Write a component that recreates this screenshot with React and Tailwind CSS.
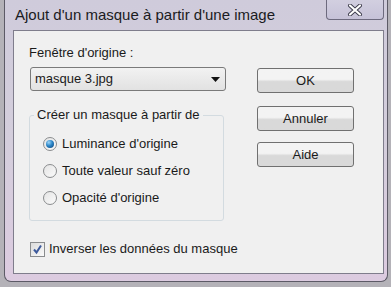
import React from 'react'

const font = { fontFamily: '"Liberation Sans", Arial, sans-serif' }

function Radio({ checked, label }) {
    return (
        <div className="flex items-center h-[16px]">
            <span className="w-[14px] h-[14px] rounded-full border border-[#8a8c8e] bg-gradient-to-br from-[#e4e4e4] to-[#fbfbfb] flex items-center justify-center shrink-0">
                {checked && (
                    <span className="w-[8px] h-[8px] rounded-full bg-[radial-gradient(circle_at_35%_30%,#9fd6f8_0%,#2b86c8_45%,#0e3f73_100%)]"></span>
                )}
            </span>
            <span className="ml-[5px] text-[13px] leading-[16px] text-[#1a1a1a] whitespace-nowrap">{label}</span>
        </div>
    )
}

function Button({ children, className }) {
    return (
        <div className={"w-[97px] h-[25px] rounded-[3px] border border-[#707070] bg-gradient-to-b from-[#f3f3f3] from-45% to-[#d9d9d9] to-55% flex items-center justify-center text-[13px] text-[#1a1a1a] " + className}>
            {children}
        </div>
    )
}

export default function App() {
    return (
        <div style={font} className="w-[391px] h-[287px] bg-[#b4b2b8] overflow-hidden">
            {/* window frame */}
            <div className="ml-[4px] w-[384px] h-[282px] border-l border-r border-b border-[#5c5a66] rounded-b-[7px] bg-gradient-to-b from-[#cfcbdb] via-[#d4cedc] to-[#dccbe0] flex flex-col">
                {/* title bar */}
                <div className="h-[29px] flex items-start">
                    <div className="ml-[10px] mt-[6px] text-[15px] leading-[18px] text-[#1b1b22] whitespace-nowrap">Ajout d'un masque à partir d'une image</div>
                    <div className="ml-auto mr-[3px] w-[58px] h-[20px] border border-t-0 border-[#6d6a7e] rounded-b-[4px] bg-gradient-to-b from-[#d2cfe0] to-[#c6c2d8] flex items-center justify-center">
                        <svg width="16" height="12" viewBox="0 0 16 12">
                            <path d="M3 1.5 L13 10.5 M13 1.5 L3 10.5" stroke="#3b3a4a" strokeWidth="4" strokeLinecap="round" />
                            <path d="M3 1.5 L13 10.5 M13 1.5 L3 10.5" stroke="#ffffff" strokeWidth="2.2" strokeLinecap="round" />
                        </svg>
                    </div>
                </div>

                {/* client area */}
                <div className="ml-[8px] mt-px w-[371px] h-[244px] border border-[#7f7d8c] bg-[#f0f0f0] flex">
                    <div className="pl-[15px] flex flex-col w-[228px]">
                        <div className="mt-[14px] text-[13px] leading-[16px] text-[#1a1a1a] whitespace-nowrap">Fenêtre d'origine :</div>
                        <div className="mt-[6px] ml-px w-[196px] h-[24px] rounded-[3px] border border-[#7a7a7a] bg-gradient-to-b from-[#f2f2f2] to-[#e2e2e2] flex items-center">
                            <span className="ml-[4px] text-[13px] text-[#1a1a1a] whitespace-nowrap">masque 3.jpg</span>
                            <svg className="ml-auto mr-[5px]" width="9" height="5" viewBox="0 0 9 5">
                                <path d="M0 0 H9 L4.5 5 Z" fill="#111" />
                            </svg>
                        </div>
                        <fieldset className="mt-[16px] w-[195px] h-[114px] border border-[#d3dbe0] rounded-[3px]">
                            <legend className="ml-[4px] px-[3px] text-[13px] leading-[16px] text-[#1a1a1a] whitespace-nowrap">Créer un masque à partir de</legend>
                            <div className="pl-[13px] pt-[13px] flex flex-col gap-[11px]">
                                <Radio checked label="Luminance d'origine" />
                                <Radio label="Toute valeur sauf zéro" />
                                <Radio label="Opacité d'origine" />
                            </div>
                        </fieldset>
                        <div className="mt-[20px] flex items-center">
                            <span className="ml-px w-[15px] h-[15px] border border-[#8a8c8e] bg-gradient-to-br from-[#dcdcdc] to-[#fafafa] flex items-center justify-center shrink-0">
                                <svg width="11" height="11" viewBox="0 0 11 11">
                                    <path d="M2 5.5 L4.5 8.5 L9 1.5" stroke="#3d5a9c" strokeWidth="2" fill="none" />
                                </svg>
                            </span>
                            <span className="ml-[4px] text-[13px] leading-[16px] text-[#1a1a1a] whitespace-nowrap">Inverser les données du masque</span>
                        </div>
                    </div>
                    <div className="ml-[15px] pt-[37px] flex flex-col">
                        <Button>OK</Button>
                        <Button className="mt-[13px]">Annuler</Button>
                        <Button className="mt-[11px]">Aide</Button>
                    </div>
                </div>
            </div>
        </div>
    )
}
